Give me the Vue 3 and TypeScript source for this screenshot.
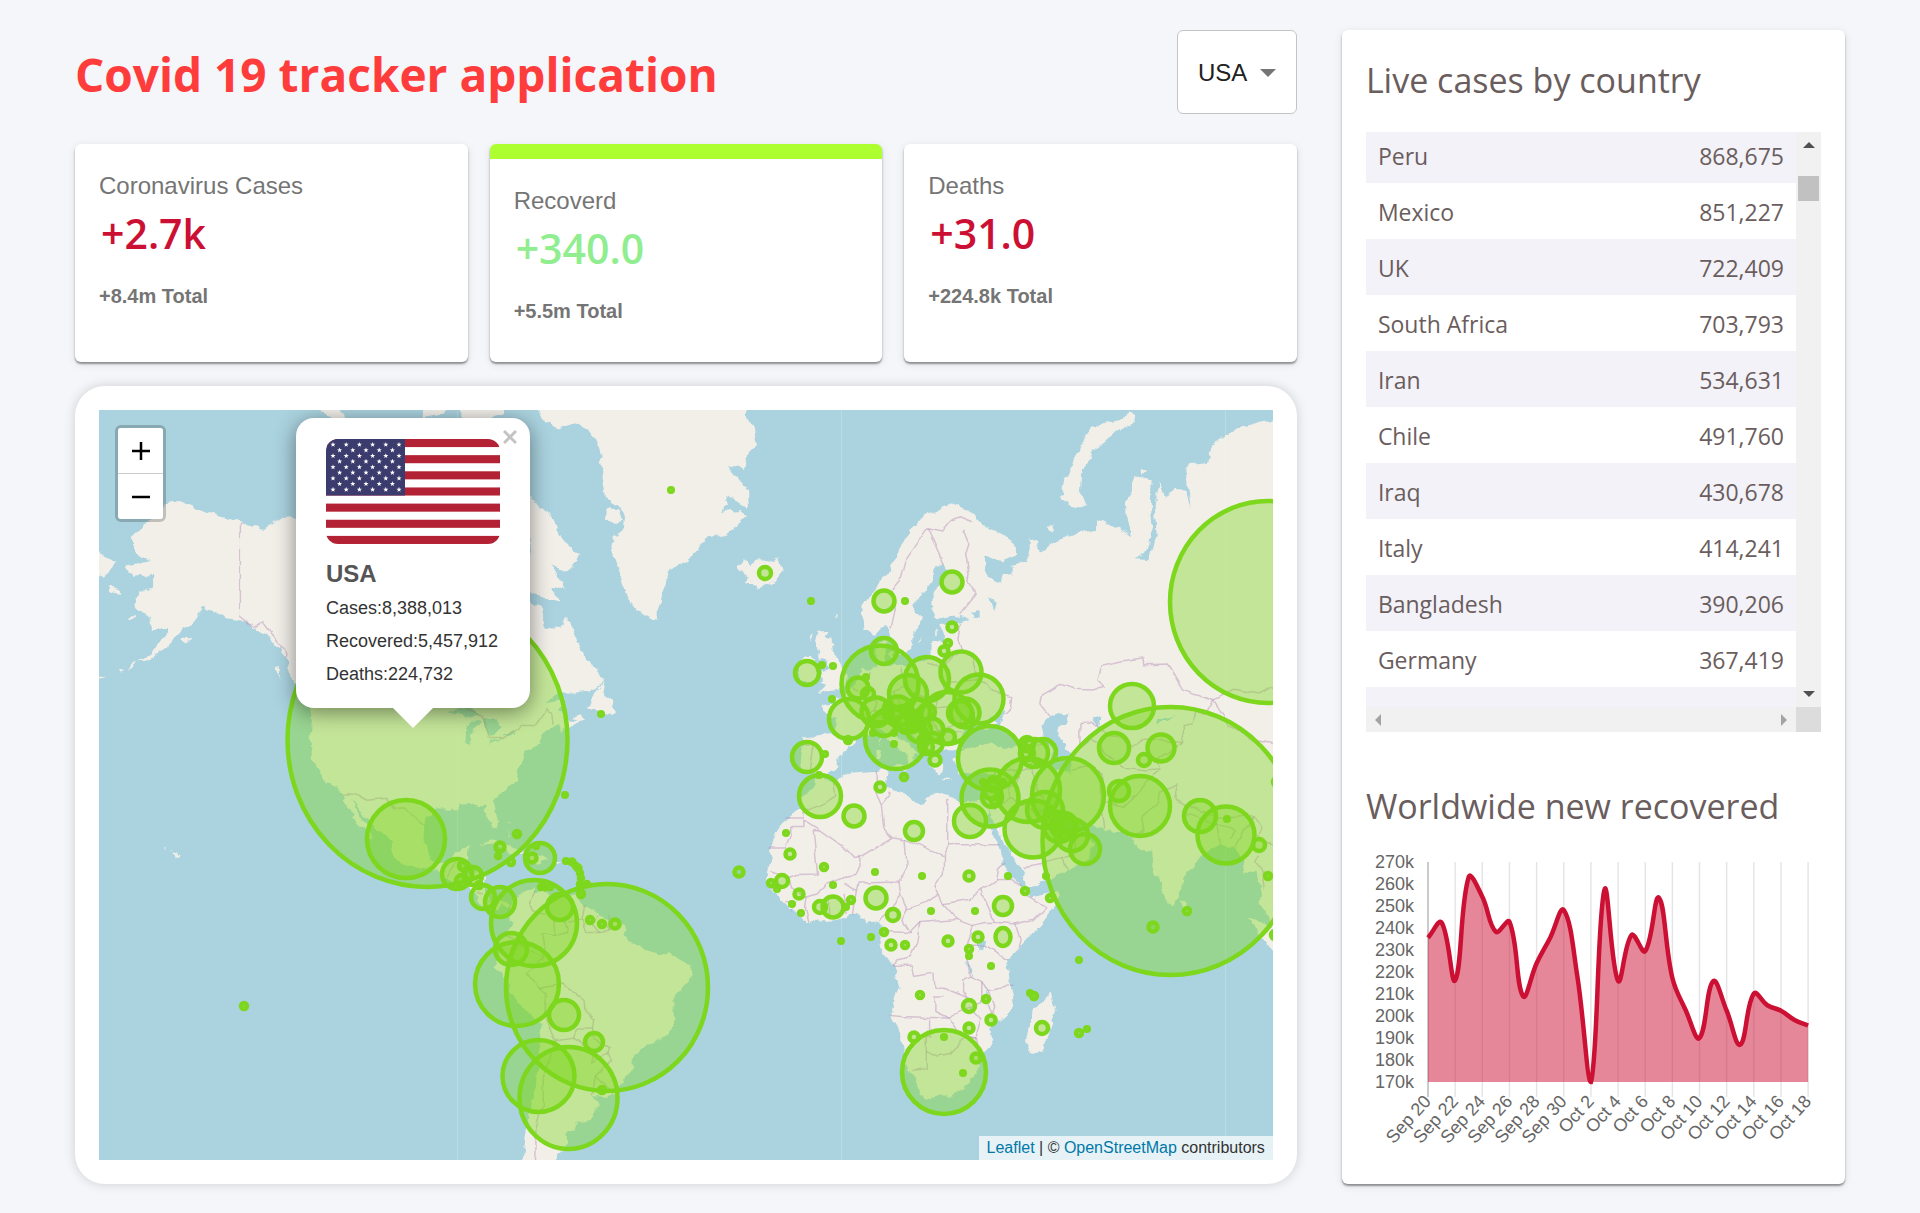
<script setup lang="ts">
import { ref } from 'vue'

const country = ref('USA')

interface Stat { title: string; value: string; total: string; tone: 'red' | 'green'; active: boolean }
const stats: Stat[] = [
  { title: 'Coronavirus Cases', value: '+2.7k', total: '+8.4m Total', tone: 'red', active: false },
  { title: 'Recoverd', value: '+340.0', total: '+5.5m Total', tone: 'green', active: true },
  { title: 'Deaths', value: '+31.0', total: '+224.8k Total', tone: 'red', active: false },
]

const rows: [string, string][] = [
  ['Peru', '868,675'], ['Mexico', '851,227'], ['UK', '722,409'], ['South Africa', '703,793'],
  ['Iran', '534,631'], ['Chile', '491,760'], ['Iraq', '430,678'], ['Italy', '414,241'],
  ['Bangladesh', '390,206'], ['Germany', '367,419'], ['', ''],
]

/* ---- line chart ---- */
const series = [
  235.6, 242.5, 216.2, 263.2, 254.2, 238.3, 242.8, 209, 224, 235.6, 248.2, 218, 170, 257.5, 216,
  236.8, 229.5, 253.8, 217.3, 202.4, 190, 215.8, 202.4, 187, 210.2, 204.9, 202.4, 198.2, 195.7,
]
const plot = { left: 62, right: 442, top: 12, bottom: 232 }
const step = (plot.right - plot.left) / (series.length - 1)
const pts = series.map((v, i) => ({
  x: plot.left + i * step,
  y: plot.bottom - ((v - 170) / 100) * (plot.bottom - plot.top),
}))
const clampY = (y: number) => Math.min(plot.bottom, Math.max(plot.top, y))

function spline(): string {
  const ctl = pts.map((c, i) => {
    const a = pts[i - 1] ?? c
    const b = pts[i + 1] ?? c
    const d0 = Math.hypot(c.x - a.x, c.y - a.y)
    const d1 = Math.hypot(b.x - c.x, b.y - c.y)
    const f0 = (0.4 * d0) / (d0 + d1)
    const f1 = (0.4 * d1) / (d0 + d1)
    return {
      px: c.x - f0 * (b.x - a.x), py: clampY(c.y - f0 * (b.y - a.y)),
      nx: c.x + f1 * (b.x - a.x), ny: clampY(c.y + f1 * (b.y - a.y)),
    }
  })
  let d = `M${pts[0].x} ${pts[0].y}`
  for (let i = 1; i < pts.length; i++) {
    d += `C${ctl[i - 1].nx} ${ctl[i - 1].ny} ${ctl[i].px} ${ctl[i].py} ${pts[i].x} ${pts[i].y}`
  }
  return d
}
const line = spline()
const area = `${line}L${plot.right} ${plot.bottom}L${plot.left} ${plot.bottom}Z`
const yTicks = Array.from({ length: 11 }, (_, i) => ({ label: `${270 - i * 10}k`, y: plot.top + i * 22 }))
const xTicks = ['Sep 20', 'Sep 22', 'Sep 24', 'Sep 26', 'Sep 28', 'Sep 30', 'Oct 2', 'Oct 4', 'Oct 6',
  'Oct 8', 'Oct 10', 'Oct 12', 'Oct 14', 'Oct 16', 'Oct 18'].map((label, i) => ({ label, x: plot.left + i * step * 2 }))

/* ---- flag ---- */
const stars: { x: number; y: number }[] = []
for (let r = 0; r < 9; r++) {
  for (let c = 0; c < (r % 2 ? 5 : 6); c++) stars.push({ x: 7 + c * 13.2 + (r % 2 ? 6.6 : 0), y: 5.6 + r * 5.62 })
}
const starPath = (x: number, y: number) =>
  Array.from({ length: 10 }, (_, k) => {
    const r = k % 2 ? 1.1 : 2.7
    const t = (Math.PI / 5) * k - Math.PI / 2
    return `${(x + r * Math.cos(t)).toFixed(2)},${(y + r * Math.sin(t)).toFixed(2)}`
  }).join(' ')

/* ---- map: web mercator, 1536 px round the globe ---- */
function project(list: string): string {
  return list.trim().split(/\s+/).map((p) => {
    const [lon, lat] = p.split(',').map(Number)
    const m = Math.log(Math.tan(Math.PI / 4 + (lat * Math.PI) / 360))
    return `${(841 + (lon * 1536) / 360).toFixed(1)},${(941 - 244.46 * m).toFixed(1)}`
  }).join(' ')
}

const land = [
  // North and Central America
  `-168,65.6 -162,66 -164,66.5 -166.5,68.3 -163,69.5 -156.5,71.3 -150,70.5 -141,69.6 -135,69 -130,70.2 -125,69.8
  -120,69.4 -115,68.3 -108,68 -102,67.8 -97,68 -94,71.5 -93,69 -88,68 -85,69.5 -82,68.5 -83,66.5 -87,65 -90,63.5
  -94,61 -94.5,59 -92.5,57 -88,56.5 -82.3,55 -82,53 -79.5,51.3 -79,54 -77,56 -78.5,58.7 -77.5,62.3 -74,62.3 -70,61
  -69.5,59 -66,58.8 -64.5,60.3 -62,57.5 -60,55 -57,53.5 -55.8,52 -56,51.4 -59,50.2 -66.5,50.2 -69,48.5 -65,49.2 -64.5,48
  -66,47.5 -64,46 -61,45.7 -64,44.5 -66,43.6 -66,45 -70,43.7 -70.7,42 -70,41.7 -74,40.7 -74.3,39.3 -75.5,38 -76,37
  -75.6,35.2 -78,33.9 -81,31.8 -81.3,29.5 -80.1,26.8 -80.5,25.2 -81.8,26.2 -82.8,28 -83.8,30 -86,30.4 -89.5,30.2
  -89.3,29.1 -91.5,29.4 -94.5,29.5 -97.2,27.8 -97.4,25.5 -97.8,22.5 -96.3,19.2 -94.5,18.1 -91.5,18.6 -90.4,20.5
  -87,21.5 -87.5,19.5 -88.2,18 -88.8,15.9 -85.5,15.9 -83.2,15 -83.7,11.5 -82,9 -79.5,9.5 -77.5,8.6 -78.3,7.8 -79.5,8.8
  -80.5,7.4 -83,8.2 -85.5,10 -87.5,13 -91.5,14 -94.5,16.2 -99,16.8 -103.5,18.3 -105.5,20.3 -105.5,22.5 -109,25.7
  -112.3,29 -114.6,31.7 -113.5,29.5 -111,26 -109.5,23.1 -110.3,23.4 -112,25.5 -114.8,27.8 -114.2,28.8 -115.8,30.3
  -117.2,32.6 -118.5,34 -120.6,34.6 -122.4,37.3 -124,39.5 -124.3,42.5 -124,46 -124.6,48.4 -122.5,48 -123,49.3
  -127.5,51 -130,54.5 -131.5,56 -134,58 -137,58.7 -140,59.8 -144,60.1 -147.5,61 -149.8,61.3 -152,59.3 -154,58.9
  -158,56.5 -162,55 -164.5,54.6 -161,56 -157.5,58.7 -162,58.7 -162,60 -165.5,61.5 -164.5,63.1 -161,63.6 -161,64.8 -166,64.6`,
  '-176,67.6 -170,66 -172.5,64.5 -176,64.8',
  '-171.7,63.6 -169,63.2 -169,62.9 -171.5,63.2',
  '-167,60.2 -165.5,60.2 -165.5,59.9 -167,59.9',
  '-166.5,54.1 -164.8,54.6 -166.8,53.4',
  '-169,53.3 -167.5,53.5 -168.5,52.9',
  '-174.5,52.4 -172,52.7 -174,52.1',
  '-154.7,57.6 -152.2,58 -153.5,57',
  '-133,54 -131.7,54 -131.2,52.2',
  '-128,50.7 -125,50 -123.5,48.4 -125.5,48.8',
  '-156,20.2 -155,19.6 -155.7,19', '-158.2,21.6 -157.7,21.3 -158,21.2', '-156.7,20.9 -156,20.8 -156.4,20.6',
  // Baffin and the northern islands
  '-62,66 -64,65.2 -68,65.8 -64.5,63.3 -68,63.6 -66,62 -72,62.7 -78,64.5 -73,65.5 -73,68 -79,70 -89,70.5 -89,73.5 -81,73.8 -75,72 -71,71 -68,70 -65,68 -61.4,66.8',
  '-86,65.6 -81,64 -83,62.8 -87,63.6',
  '-120,78 -116,76.5 -118,76.3 -122,77', '-89,78 -79,78 -79,76.8 -84,76.6 -89,76.4', '-98,78 -92,78 -93,76.7 -98,76.5',
  '-59.3,47.8 -57.3,50.5 -55.6,51.5 -56,50 -53.5,49.2 -53,46.7 -55.8,46.9',
  '-63.5,46.6 -61,47 -60,46 -61.5,45.6',
  // Caribbean
  '-85,22 -82,23.1 -77,21.5 -74.3,20.2 -77.5,19.9 -78.5,21.3 -83,22.3',
  '-74.4,18.5 -73.2,19.9 -70,19.7 -68.4,18.6 -71.5,17.7', '-78.3,18.4 -76.3,18.2 -77.5,17.8', '-67.2,18.5 -65.7,18.4 -66.8,18',
  '-78.2,25 -77.7,24.2 -78,23.9', '-77.8,26.8 -77,26.5 -78.5,26.7',
  // South America
  `-77.5,8.6 -75.5,10.7 -71.7,12.3 -71.8,10.8 -70,11.8 -68,10.6 -64,10.4 -61.9,10.6 -60,8.3 -57,6 -51.5,4.3 -50,0 -48,-1 -44,-2.7
  -40,-2.9 -37,-4.9 -35,-5.5 -34.9,-8 -39,-13 -39,-18 -41,-22 -44,-23 -48.5,-26 -48.7,-28.5 -53.5,-34 -58,-34.2 -57,-36.3
  -58.5,-38.4 -62,-39 -62.3,-40.7 -65,-41 -63.7,-42.6 -65.2,-44 -67.5,-46 -67,-48 -75,-48 -74,-42 -73.3,-38 -71.5,-32 -70.2,-19
  -76,-14.5 -79.5,-7.5 -81.2,-6 -80,-3.5 -80.9,-1 -78.5,1.5 -77.3,4 -77.8,7.5`,
  // Europe and Asia
  `-9,37 -9.5,38.8 -8.8,43 -4,43.5 -1.5,43.5 -1.2,46 -4.7,48 -1.5,48.7 -1.8,49.7 0,49.4 2,51 4,52 5,53.4 8.5,53.8 8.2,56.8
  10.5,57.7 10.5,56.2 10,54.8 11,54 14,54.2 18.5,54.7 21,55.3 21,57 22,57.6 24.2,57 24,58.5 23.5,59.3 28,59.6 30,60
  26,60.4 23,60 21.4,61 21.5,63 25.3,65 24,65.8 22,65.5 21.5,64.3 17.5,62 17.2,60.7 19,60 17,58.7 16.5,56.5 14.3,55.5
  12.9,55.6 11.3,58.8 10.5,59.4 8,58.1 5.5,58.8 5,61.5 8.5,63.6 12.5,66 15,68.3 19,70 25.5,71 31,70.3 33,69.4 38,68.5 41,67.5
  41,66.6 38,66.1 33,66.7 34.8,64.5 37.5,64 38,65 40,64.7 40,65.8 44,66.2 44,68.3 46,68 46,66.8 50,67.8 53,68.5 60,68.9 60,69.8
  64,69.2 68,68.2 67,69.7 66.8,71 69,73 72.8,72.8 72.6,71 73,69 71.5,66.9 69,66.4 72.5,66.3 74,68.5 73.5,71 74.8,72.6
  76,71.4 78,72.2 81,71.8 82,70.5 81.5,72 80.5,73.7 86,73.9 87,75 92,75.9 101.5,76.5 110,76.5 110,0 103,1 101,3
  100.3,6 98.3,8 98.7,10.5 97.6,16 94.5,16 94,18.5 92,21.5 90,22 87,21.4 85,19.7 82,16.7 80.2,15 80,12 79,10.3 78,8.2
  76.5,8.8 74.8,13 73,17 72.7,20.5 70.5,21 69,22.3 67,24.8 61.6,25.2 57,26.8 54,26.6 51,28 48.5,30 48,29.5 50,26.5
  51.2,24.5 54,24.1 56.3,26 56.6,24.4 59.7,22.5 57.8,19 55,17.2 52,15.6 45,12.9 43.3,12.7 42.7,16 39,21 35,28 34.9,29.4
  34.2,27.9 32.6,29.8 32.5,31.2 34.3,31.3 36,35.5 36,36.8 30.5,36.5 27.5,36.8 26.3,39.4 29,41 35,42 38,41 41.6,41.6
  37,45.2 39,47.2 35,46.3 36.5,45.2 33.6,44.5 32.7,46 30.8,46.5 28.5,43.7 28,41.9 28.8,41.2 26.2,40.7 24,40.8 22.8,40.3
  24,38 22.9,36.6 21.5,37.5 19.4,41 19.3,42 15.5,43.8 13.6,45.5 12.3,45.3 12.5,44 14,42.6 16,41.8 18.4,40.2 16.8,40.5
  17,39 15.8,38 15.6,40 12.4,41.8 10.3,43.7 8.8,44.4 6.5,43.2 3.2,43.2 3.2,41.9 -0.3,39.5 -0.7,37.7 -2,36.8 -5.5,36.1 -6.3,36.9`,
  '-5.5,50.1 1.3,51.1 1.7,52.7 0.2,53 -0.2,54.2 -1.6,55.5 -2,57.6 -4,57.7 -3,58.6 -5,58.5 -5.7,57 -5,55 -3,54.8 -3,53.4 -4.5,53.2 -4.5,52 -5.2,51.8 -3,51.5',
  '-6,52.2 -10,51.6 -9.5,53.3 -10,54.2 -7.5,55.3 -5.6,54.5',
  '12.5,38 15.6,38.2 15,36.7', '8.3,41 9.7,41 9.5,39.2 8.4,39', '8.7,42.6 9.5,43 9.3,41.5', '23.6,35.5 26.3,35.2 24,35',
  '32.4,35 34.5,35.6 33.5,34.7', '11,55.6 12.5,56 12,54.8', '18.2,57.4 19,57.9 18.3,57', '22,58.4 23.2,58.5 22.2,58',
  '48.2,69.2 50.3,69.2 49,68.7', '70,73.5 71.5,73.4 70.5,73.1', '-1.4,60.5 -1,60.6 -1.2,60', '-7.4,57.8 -6.4,58.4 -7,57.2',
  '80,9.7 81.8,7.2 80.5,6 79.8,8', '95.3,5.6 97.5,5.2 104,1 104,-5 100,-1',
  // Africa
  `-5.9,35.8 -2,35.1 3,36.9 10,37.3 11,36.8 10.2,34.2 15,32.4 19,30.3 20,32 23,32.7 29,30.9 32.5,31.2 32.5,29.9 35.5,24
  37.3,21 38,18 39.5,15.5 43.2,12.3 43,11.4 44.5,10.4 51.2,11.9 50.8,9 47,4 41.5,-1.8 39,-5 39.5,-9 40.6,-14.5 39.5,-16.5
  35,-20 35.5,-23.5 32.8,-25.8 32.5,-28.5 29,-32.5 25.7,-34 20,-34.8 18.4,-34 18,-32 15,-27 14.3,-22 11.8,-17 13.7,-11
  12.2,-6 9,-1 9.7,3.5 8.5,4.6 6,4.3 4,6.3 -2,4.8 -7.5,4.4 -13,8.7 -16.8,12.5 -17.4,14.7 -16.2,19 -17,21 -14.8,25.5
  -11.5,28.3 -9.6,30 -9.8,31.5 -6,34`,
  '49.3,-12 50.4,-15.5 47,-25 45,-25.5 43.5,-23 44.3,-20 44.3,-16.5 48,-13.5',
].map(project)

const arctic = [
  'M538 396v14l7 12 12 6 16-6 17 10 10 18 3 30 3 18 12 7 7 10-1 15-10 5-2 15 8 25 8 22 9 14 18 9 5-15 6-23 6-14 18-8 10-15 6-7 22-5 19-18-9-5-18 3 8-8-3-10 10 5 14 10-1-20-13-15-7-10 17 5 3-15 10-10-3-15-7-10-2-10v-14Z',
  'M608 507l10 2 5 10-8 6-8-6Z',
  'M738 566l7-8 5 8 8-4 8-3 8 2 5-4 4 13-8 12-15 6-16-4 4-6-4-5Z',
  'M1129 411l7 6-4 8-17 8-15 12-12 15-8 15-1 15 7 18-16-2-8-9 3-17 7-15 8-20 10-15 12-6 16-4Z',
]

const water = [
  '47,45 49,46.6 51,47 53,46.8 53,45.3 51,44.7 51,43.6 52.7,42 52.8,41 53.8,40.3 53.8,37 50,37.4 49,38.5 49.5,40.5 47.5,43',
  '-92,46.8 -88,48.6 -84.7,46.6 -87.5,46.5', '-88,42 -87.9,44.5 -86,46 -84.5,45.8 -86.4,43.5 -87,41.8',
  '-84,45.9 -81,45.9 -80,44.6 -81.8,43.3 -83.5,44', '-83,41.6 -79,42.8 -81,42.6', '-79.7,43.3 -76.3,44 -76.5,43.4',
  '-98,53.5 -96.5,51 -98.8,52', '-117,61 -109,62.5 -113,61.6', '-124,66.5 -118,66 -121,65',
  '30.2,61 32.5,61 32.5,60 31,60', '34.5,62.5 36,62 35.5,61', '58.5,46 61,46.5 60,44.5',
  '74,46 79,46.7 74.5,45.4', '31.8,0.3 34,0 33.5,-2.4 32,-2.3', '29.2,-3.5 30.6,-7 31.1,-8.6 30,-7.2', '34,-10 34.8,-13.8 34.4,-13.5',
].map(project)

const borders = [
  '-141,69.6 -141,60.3 -137.5,58.9 -135.5,59.7 -133.5,58.3 -130,56 -130.2,55',
  '-123,49 -95,49 -89,48 -84,46.5 -82.5,43 -79,43 -76.5,44 -74.7,45 -71.5,45 -70.3,46.2 -69.2,47.4 -67.8,47 -67.5,45.2',
  '-117,32.5 -114.7,32.6 -111,31.3 -106.5,31.7 -104.5,29.5 -102.5,29.8 -99.5,27.5 -97.2,25.9',
  '-92,14.6 -91.5,16 -90.5,17.8 -89.2,17.8 -89,16', '-89.3,14.4 -87.5,13.2', '-85.5,11.2 -83.7,11',
  '-77.3,8.5 -77.8,7.2', '-71.5,11.8 -73,9.2 -72,7 -67.5,6.2 -67,1.3 -70,1.7 -69.5,-1 -70,-4.2 -73,-2.3 -75.3,-0.1 -78.8,1.4',
  '-67,1.3 -64,2 -64.7,4.2 -60.7,5.2 -60,8.2', '-60.7,5.2 -59.8,2 -56.5,2 -54.5,2.3 -51.6,4.2', '-57.3,5.9 -58,4 -56.5,2', '-54,5.8 -54.5,2.3',
  '-80.2,-3.4 -78.5,-5 -75.5,-1 -75.3,-0.1', '-70,-4.2 -73.5,-7.5 -70.5,-11 -69,-12.4 -69.5,-17.5 -70.3,-18.3',
  '-70.5,-11 -65.3,-10 -60.2,-13.8 -60,-16.2 -57.7,-18 -58,-20 -62,-20 -62.7,-22.2 -67,-22.8 -69.5,-17.5',
  '-58,-20 -57.8,-22.2 -54.3,-24.2 -54.6,-25.6 -58.5,-27.3 -57.8,-25.2 -62.7,-22.2',
  '-54.6,-25.6 -53.8,-27 -57.6,-30.2 -58.3,-34', '-57.6,-30.2 -53.4,-33.7', '-67,-22.8 -68.5,-27 -70,-31 -70,-36 -71.5,-40 -71.5,-45 -72,-48',
  '11.5,58.9 12.5,61.2 12,63.3 14.2,64.5 15.5,66.5 20,69 20.5,69.1 23.8,68.8 25.8,69.7 28,70 30.9,69.6', '20.5,69.1 24,66 24.2,65.8',
  '28.5,69 30,67.7 29.2,66.8 30,65 29.7,64 31.5,62.8 27.8,60.6', '-7.4,37.2 -7,39.5 -6.5,41.7 -8.7,42', '-1.7,43.4 3.1,42.5',
  '2.5,51 6,49.5 8.2,49 7.6,47.6 6.1,46.3 7.6,43.8', '6,49.5 6.2,51.5 7.1,53.2', '7.6,47.6 10.5,46.9 13.6,46.6', '14.3,53.9 14.8,51 12.2,50.3 13.8,48.7 13,47.6',
  '14.8,51 18.8,49.5 22.6,49.1 24,51 23.6,52.6 23.5,54 20,54.4', '23.5,54 26.5,55.4 28.2,56.2 27.4,57.6 28,59.4', '28.2,56.2 31,55 31.8,53.2 31.7,52.1 24,51.6',
  '31.7,52.1 34.3,51.5 35.5,50.4 40,49.6 39.7,47.9 38.3,47.1', '22.6,49.1 22.2,48 26.6,48.3 28.2,46.5 28.2,45.5 22.5,44 21,46.3 22.2,48', '28.5,43.7 22.7,44.1 22.9,42 26.4,42',
  '51,51.5 47,50 46.6,48.5 49,46.5', '51,51.5 55,50.7 59,50.6 61.5,51 60.2,52.2 61.2,54 65,54.5 71,55 71.2,54.2 76.5,54.3 80,50.8 87.3,49.1 85.5,47 83,47.2 82.3,45.3 80.2,45 80.3,42.1',
  '56,45.5 56,41.3 58.5,42.7 60,42.2 62,40.2 66.6,37.5 71.5,37 75,37.2 74,39 80.3,42.1', '56,45.5 58.6,45.6 62,43.5 66,42.8 68,41.2 71,42.7 80.3,42.1',
  '54,37.3 58,38 61.2,36.6 61,34 61,31 61.8,25.3', '61,31 66.3,29.9 69.5,32.5 71.5,35 74.8,37', '68.2,23.9 71,25 70.5,28 74,30.5 75,33 78.5,34.5 78.8,31.5 81,30.2 88,27.9 92,27.8 97,28.2 94.5,25 92.4,21.2',
  '81,30.2 80.2,28.8 88.1,26.4 89.8,26.2 92.4,25 91.3,23.5', '88.1,26.4 88.5,24 89,22', '97,28.2 98.7,25.8 97.6,24 101,21.7', '98,19.8 97.5,18.5 98.7,16 99.2,12',
  '87.3,49.1 92,50.7 98,50 102,51.3', '87.3,49.1 91,45.2 96,42.8 105,41.6', '44.8,37.2 44,39.4 48,38.8 48.8,38.4', '36,36.8 42.4,37.1 44.8,37.2 46,35 45.5,33.8 48,30.5', '42.4,37.1 41,34.5 38.8,33.3 39.2,32.1 44.7,29.2 47.5,29 48,30',
  '36,29.2 38,30.5 39.2,32.1', '42.8,16.4 44.5,17.4 52,19 53,16.6', '52,19 55,20 55.2,22.7 51.5,24.2', '41.5,41.5 46.5,41.8 48.5,41.8',
  '-13,27.7 -8.7,27.7 -8.7,25.9 -12,25.9 -12,23.5 -13,21.3 -17,21.3', '-8.7,27.7 -8.7,28.8 -3.5,31 -1.2,32.2 -1.8,35', '-8.7,27.2 -4.8,25 -6.5,25 -5.5,15.5 -10.5,15.4 -12,14.8 -16.4,16.3',
  '-4.8,25 1.2,21.1 3.2,19 4.2,19.2 12,23.5 10,25.5 9.5,30.2 8.2,33 8.3,36.8', '12,23.5 15,23 24,19.5 24,20 25,22 25,31.6', '25,22 36.9,22', '9.5,30.2 11.4,32.3 11.5,33.2',
  '4.2,19.2 4.2,16.8 3.5,15.4 1,15 -3.5,13.5 -5.5,11 -8,10.2 -11.4,12.4 -12,14.8', '15,23 15.5,17 13.6,13.7 4,13.5 3.6,11.7 1,13.4', '24,19.5 24,15.7 22,12.8 23,10.9 20,9 15.5,7.5 14,11 13.6,13.7',
  '3.6,11.7 2.7,6.4', '0.5,11 1.2,6.1', '-2.8,11 -3,5.1', '-7.5,4.4 -8.3,7.5 -8,10.2', '-11.5,7 -10.6,9 -13,9.2', '-16.7,12.4 -13.7,12.6', '8.7,4.8 11,6.8 14,11', '15.5,7.5 14.5,4.8 16.2,2 10,2.2',
  '16.2,2 18.5,4.3 27.3,5 24,8.7 23,10.9', '18.5,4.3 17.7,-0.5 16,-4 12.8,-4.7 12.3,-5.9', '27.3,5 31,3.6 34,4.3 36,4.4 41,4 42,-0 41.5,-1.7', '24,8.7 30,9.7 33,12 34,8.5 36,4.5', '33,12 36.5,14.2 37,17 38.5,18', '36.5,14.2 40,14.3 42.5,12.4', '41,4 45,5 48,8 43,11',
  '31,3.6 29.6,-1 29.3,-4.4 30.7,-8.2 28.5,-9.1 28.5,-12 29.8,-13.3 24,-11 22,-11 21.8,-7.3 17,-8 16.5,-5.9 12.3,-5.9', '29.6,-1 34,-1 39.2,-4.7', '30.7,-8.2 33,-9.5 34.5,-11.5 40.4,-10.5', '33,-9.5 33,-14 30.2,-15.3 25.3,-17.8 22,-16.3 22,-13 24,-13',
  '11.8,-17.2 14,-17.4 23.3,-17.7 25.3,-17.8 28,-21.6 31.3,-22.4 32.8,-18 30.2,-15.3', '21,-18 21,-22 20,-22 20,-28.4 17,-28.8', '20,-24.8 22.5,-26 25.5,-25.5 29.3,-22.2 31.3,-22.4 32,-26 32.8,-26.8',
  '34.5,-11.5 35.8,-15 35.2,-17 34.3,-14.5',
].map(project)

/* x, y, radius and, for the widest ones, the vertical radius */
const circles: number[][] = [
  [427.5, 740, 140, 147], [406, 839, 39], [607, 987.5, 101, 103.5], [1170.5, 841, 128, 134], [1268, 602, 98, 101],
  [457, 874, 15], [473, 876, 9], [462, 881, 6], [463, 866, 4], [479, 885, 3], [483, 897, 12], [500, 902, 15], [500, 847, 4.5],
  [498, 856, 2], [511, 862, 3], [517, 834, 3], [540, 858, 15], [532, 858, 4.5], [536, 846, 2], [565, 795, 1.8],
  [566, 861, 1.8], [572, 862, 2.5], [576, 866, 2], [578, 868, 2.5], [580, 873, 2], [581, 878, 2], [580, 884, 2], [580, 888, 2], [587, 884, 2], [581, 894, 3],
  [534, 923, 43], [560, 907, 13], [541, 887, 2], [545, 887, 2.5], [550, 887, 2], [590, 920, 3], [602, 924, 3], [615, 924, 4.5],
  [511, 949, 16], [517, 984, 42], [564, 1015, 15], [594, 1042, 9], [538.5, 1076, 36], [568.5, 1098, 49, 51], [602, 1090, 3],
  [739, 872, 4.5], [244, 1006, 3], [671, 490, 1.8], [765, 573, 6], [811, 601, 1.8], [807, 673, 12], [822, 665, 1.8], [833, 666, 1.8], [832, 699, 1.8], [601, 714, 1.8],
  [952, 582, 10.5], [884, 601, 10.5], [905, 601, 1.8], [952, 627, 4.5], [948, 643, 3], [944, 651, 4.5], [884, 651, 13], [880, 684, 38.5],
  [961, 672, 20.5], [927, 679, 22], [979, 699, 24.5], [908, 694, 19], [858, 688, 10.5], [866, 677, 1.8], [868, 694, 6], [849, 719, 20],
  [876, 712, 14.5], [898, 711, 14.5], [896, 738, 31], [903, 718, 12], [884, 724, 12], [917, 712, 13], [927, 712, 8], [947, 718, 26], [965, 713, 14.5],
  [960, 713, 12], [932, 730, 11.5], [919, 730, 12], [907, 724, 9], [913, 726, 6], [948, 737, 7], [933, 743, 10], [926, 747, 7], [923, 741, 5], [935, 760, 5.5],
  [873, 733, 1.8], [894, 733, 1.8], [894, 744, 1.8], [848, 740, 3], [904, 777, 3], [880, 787, 4.5], [807, 757, 15], [825, 754, 1.8], [819, 775, 1.8],
  [820, 796, 21], [854, 816, 10.5], [786, 833, 1.8], [914, 831, 9], [970, 821, 16], [990, 758, 32], [990, 798, 28.5], [992, 790, 9], [992, 797, 10],
  [994, 784, 7], [983, 782, 2], [1003, 782, 2], [995, 801, 4], [1028, 790, 32], [1027, 744, 7], [1034, 753, 14], [1043, 752, 13], [1027, 753, 7],
  [1033, 829, 28.5], [1068, 795, 36, 37], [1045, 810, 18], [1059, 827, 15], [1064, 826, 13], [1068, 825, 9], [1072, 835, 16], [1085, 849, 15],
  [1140, 806, 30], [1119, 791, 10], [1114, 748, 15], [1161, 748, 13.5], [1144, 760, 6], [1132, 706, 22], [1200, 816, 16], [1226, 835, 28.5], [1227, 819, 1.8],
  [1259, 845, 6], [1268, 876, 3], [1187, 911, 3], [1153, 927, 4.5], [1079, 960, 1.8], [1277, 782, 4], [1275, 935, 4],
  [1008, 876, 1.8], [1046, 876, 1.8], [1025, 891, 3], [1050, 898, 3], [1003, 906, 9], [1003, 937, 7.5, 9],
  [790, 854, 4.5], [824, 867, 3], [875, 872, 1.8], [922, 876, 1.8], [969, 876, 4.5], [782, 881, 6], [771, 883, 3], [777, 889, 1.8], [799, 894, 4.5],
  [833, 885, 1.8], [792, 904, 1.8], [801, 913, 1.8], [820, 907, 6], [833, 907, 10.5], [846, 907, 1.8], [851, 900, 3], [876, 898, 10.5], [893, 915, 6],
  [931, 911, 1.8], [975, 911, 1.8], [884, 932, 3], [871, 937, 1.8], [841, 941, 1.8], [891, 945, 4.5], [905, 945, 3], [948, 941, 4.5], [978, 937, 4.5],
  [969, 949, 3], [969, 956, 1.8], [991, 966, 1.8], [920, 995, 3], [969, 1006, 6], [986, 999, 3], [991, 1020, 4.5], [969, 1028, 4.5], [914, 1037, 4.5],
  [944, 1037, 1.8], [944, 1072, 42], [976, 1058, 4.5], [963, 1073, 1.8], [1042, 1028, 6], [1030, 993, 1.8], [1034, 996, 3], [1079, 1033, 3], [1087, 1029, 1.8],
]
</script>

<template>
  <div class="app">
    <main class="left">
      <header class="header">
        <h1>Covid 19 tracker application</h1>
        <div class="picker">
          <select v-model="country" aria-label="Country">
            <option>USA</option>
            <option>Worldwide</option>
          </select>
          <svg class="caret" viewBox="0 0 16 8" aria-hidden="true"><path d="M0 0h16l-8 8z" /></svg>
        </div>
      </header>

      <section class="stats">
        <article v-for="s in stats" :key="s.title" class="card stat" :class="{ active: s.active }">
          <p class="stat-title">{{ s.title }}</p>
          <h2 :class="s.tone">{{ s.value }}</h2>
          <p class="stat-total">{{ s.total }}</p>
        </article>
      </section>

      <section class="map-card">
        <div class="map">
          <svg class="world" viewBox="99 410 1174 750" preserveAspectRatio="xMinYMin slice" aria-hidden="true">
            <defs>
              <filter id="coast" x="0" y="0" width="100%" height="100%">
                <feTurbulence type="fractalNoise" baseFrequency="0.09" numOctaves="3" seed="4" />
                <feDisplacementMap in="SourceGraphic" scale="8" xChannelSelector="R" yChannelSelector="G" />
              </filter>
              <filter id="frontier" x="0" y="0" width="100%" height="100%">
                <feTurbulence type="fractalNoise" baseFrequency="0.06" numOctaves="2" seed="7" />
                <feDisplacementMap in="SourceGraphic" scale="6" xChannelSelector="R" yChannelSelector="G" />
              </filter>
            </defs>
            <rect x="99" y="410" width="1174" height="750" fill="#aad3df" />
            <g filter="url(#coast)">
              <g fill="#f2efe9">
                <polygon v-for="(p, i) in land" :key="i" :points="p" />
                <path v-for="(d, i) in arctic" :key="'a' + i" :d="d" />
              </g>
              <polygon v-for="(p, i) in water" :key="'w' + i" :points="p" fill="#aad3df" />
            </g>
            <g filter="url(#frontier)">
              <polyline v-for="(p, i) in borders" :key="'b' + i" :points="p" class="border" />
            </g>
            <path d="M457.500 410v750M841.500 410v750M1225.500 410v750" stroke="#fff" stroke-opacity=".2" />
            <ellipse v-for="(c, i) in circles" :key="'c' + i" class="spot" :cx="c[0]" :cy="c[1]" :rx="c[2]" :ry="c[3] ?? c[2]" />
          </svg>

          <div class="zoom">
            <button type="button" aria-label="Zoom in"><svg viewBox="0 0 18 18"><path d="M9 0v18M0 9h18" /></svg></button>
            <button type="button" aria-label="Zoom out"><svg viewBox="0 0 18 18"><path d="M0 9h18" /></svg></button>
          </div>

          <div class="popup">
            <button type="button" class="close" aria-label="Close popup"><svg viewBox="0 0 14 14"><path d="M1 1l12 12M13 1L1 13" /></svg></button>
            <svg class="flag" viewBox="0 0 174 105" aria-hidden="true">
              <rect width="174" height="105" fill="#fff" />
              <rect v-for="n in 7" :key="n" width="174" height="8.080" :y="(n - 1) * 16.15" fill="#b22234" />
              <rect width="79" height="56.500" fill="#3c3b6e" />
              <polygon v-for="(s, i) in stars" :key="'s' + i" :points="starPath(s.x, s.y)" fill="#fff" />
            </svg>
            <h3>USA</h3>
            <p>Cases:8,388,013</p>
            <p>Recovered:5,457,912</p>
            <p>Deaths:224,732</p>
          </div>

          <div class="credit"><a href="#">Leaflet</a> | © <a href="#">OpenStreetMap</a> contributors</div>
        </div>
      </section>
    </main>

    <aside class="card side">
      <h3>Live cases by country</h3>
      <div class="scroller">
        <div class="rows">
          <table>
            <tbody>
              <tr v-for="(r, i) in rows" :key="i"><td>{{ r[0] }}</td><td>{{ r[1] }}</td></tr>
            </tbody>
          </table>
        </div>
        <div class="bar vertical">
          <svg viewBox="0 0 12 6"><path d="M0 6h12L6 0z" /></svg>
          <span class="thumb"></span>
          <svg viewBox="0 0 12 6"><path d="M0 0h12L6 6z" /></svg>
        </div>
        <div class="bar horizontal">
          <svg viewBox="0 0 6 12"><path d="M6 0v12L0 6z" /></svg>
          <svg viewBox="0 0 6 12"><path d="M0 0v12l6-6z" /></svg>
        </div>
        <div class="corner"></div>
      </div>

      <h3 class="second">Worldwide new recovered</h3>
      <svg class="chart" viewBox="0 0 455 310" role="img" aria-label="Worldwide new recovered">
        <g class="grid">
          <path v-for="(t, i) in xTicks" :key="i" :d="`M${t.x} ${plot.top}V${plot.bottom + 15}`" :class="{ axis: i === 0 }" />
        </g>
        <path :d="area" fill="#cc1034" fill-opacity=".5" />
        <path :d="line" class="line" />
        <g class="labels">
          <text v-for="t in yTicks" :key="t.label" x="48" :y="t.y + 6" text-anchor="end">{{ t.label }}</text>
          <text v-for="t in xTicks" :key="t.label" :transform="`translate(${t.x + 4} 252) rotate(-48)`" text-anchor="end">{{ t.label }}</text>
        </g>
      </svg>
    </aside>
  </div>
</template>

<style>
body {
  background: #f5f6fa;
}
</style>

<style scoped>
* {
  box-sizing: border-box;
  margin: 0;
}
.app {
  display: grid;
  grid-template-columns: minmax(0, 17fr) minmax(0, 7fr);
  gap: 45px;
  align-items: start;
  padding: 30px 75px 28px;
  font-family: "Liberation Sans", Arial, sans-serif;
}
.header {
  display: flex;
  justify-content: space-between;
  align-items: center;
  margin-bottom: 30px;
}
h1 {
  font: 700 46px/64px "Open Sans", "Noto Sans", sans-serif;
  color: #ff3c3c;
  padding-top: 4px;
}
.picker {
  position: relative;
}
select {
  appearance: none;
  display: block;
  width: 120px;
  height: 84px;
  padding: 0 20px;
  border: 1px solid #c4c4c4;
  border-radius: 6px;
  background: #fff;
  color: #212121;
  font: 24px "Liberation Sans", Arial, sans-serif;
}
.caret {
  position: absolute;
  right: 21px;
  top: 39px;
  width: 16px;
  height: 8px;
  fill: #757575;
  pointer-events: none;
}
.stats {
  display: grid;
  grid-template-columns: repeat(3, minmax(0, 1fr));
  gap: 22px;
  margin-bottom: 24px;
}
.card {
  background: #fff;
  border-radius: 6px;
  box-shadow: 0 2px 2px rgba(0, 0, 0, 0.38), 0 2px 8px rgba(0, 0, 0, 0.1);
}
.stat {
  min-height: 218px;
  padding: 24px;
}
.active {
  border-top: 15px solid greenyellow;
}
.stat-title {
  font-size: 24px;
  line-height: 36px;
  color: #757575;
}
h2 {
  padding-left: 2px;
  font: 600 41px/58px "Open Sans", "Noto Sans", sans-serif;
}
.red {
  color: #cc1034;
}
.green {
  color: lightgreen;
}
.stat-total {
  margin-top: 16px;
  font-size: 20px;
  font-weight: 700;
  line-height: 36px;
  color: #757575;
}
.map-card {
  padding: 24px;
  border-radius: 30px;
  background: #fff;
  box-shadow: 0 0 12px rgba(0, 0, 0, 0.16);
}
.map {
  position: relative;
  overflow: hidden;
}
.world {
  display: block;
  width: 100%;
  height: 750px;
}
.border {
  fill: none;
  stroke: #b48cb4;
  stroke-opacity: 0.45;
  stroke-width: 1.5;
  stroke-linejoin: round;
}
.spot {
  fill: #7dd71d;
  fill-opacity: 0.4;
  stroke: #7dd71d;
  stroke-width: 4.5;
}
.zoom {
  position: absolute;
  left: 16px;
  top: 15px;
  border: 3px solid rgba(0, 0, 0, 0.2);
  border-radius: 6px;
  background-clip: padding-box;
}
.zoom button {
  display: flex;
  justify-content: center;
  align-items: center;
  width: 45px;
  height: 45px;
  padding: 0;
  border: 0;
  border-radius: 0 0 3px 3px;
  background: #fff;
}
.zoom button:first-child {
  height: 46px;
  border-bottom: 1px solid #ccc;
  border-radius: 3px 3px 0 0;
}
.zoom svg {
  width: 18px;
  height: 18px;
  stroke: #000;
  stroke-width: 2.5;
}
.popup {
  position: absolute;
  left: 197px;
  top: 8px;
  width: 234px;
  height: 290px;
  padding: 21px 30px;
  border-radius: 18px;
  background: #fff;
  color: #333;
  box-shadow: 0 4px 21px rgba(0, 0, 0, 0.45);
}
.popup::after {
  content: "";
  position: absolute;
  left: 97px;
  top: 290px;
  border: 20px solid transparent;
  border-top-color: #fff;
  border-bottom: 0;
}
.close {
  position: absolute;
  right: 12px;
  top: 11px;
  width: 16px;
  height: 16px;
  padding: 1px;
  border: 0;
  background: none;
}
.close svg {
  display: block;
  stroke: #c3c3c3;
  stroke-width: 3;
}
.flag {
  display: block;
  width: 174px;
  height: 105px;
  border-radius: 12px;
}
.popup h3 {
  margin: 14px 0 2px;
  font-size: 24px;
  line-height: 32px;
  color: #555;
}
.popup p {
  font-size: 18px;
  line-height: 33px;
}
.credit {
  position: absolute;
  right: 0;
  bottom: 0;
  padding: 0 8px;
  background: rgba(255, 255, 255, 0.7);
  font-size: 16px;
  line-height: 24px;
  color: #333;
}
.credit a {
  color: #0078a8;
  text-decoration: none;
}
.side {
  padding: 24px;
  color: #6a5d5d;
}
.side h3 {
  margin-bottom: 26px;
  font: 400 34px/52px "Open Sans", "Noto Sans", sans-serif;
  white-space: nowrap;
}
.side .second {
  margin: 48px 0 18px;
}
.scroller {
  display: grid;
  grid-template-columns: minmax(0, 1fr) 25px;
  grid-template-rows: 575px 25px;
}
.rows {
  overflow: hidden;
}
table {
  width: 100%;
  margin-top: -5px;
  border-collapse: collapse;
  font: 23px "Open Sans", "Noto Sans", sans-serif;
}
tr:nth-child(odd) {
  background: #f3f2f8;
}
td {
  height: 56px;
  padding: 2px 12px 0;
}
td:last-child {
  text-align: right;
}
.bar {
  display: flex;
  align-items: center;
  background: #f1f1f1;
}
.vertical {
  flex-direction: column;
  padding: 10px 2px;
}
.vertical svg {
  width: 12px;
  height: 6px;
  fill: #505050;
}
.vertical svg:last-child {
  margin-top: auto;
}
.thumb {
  width: 21px;
  height: 25px;
  margin-top: 28px;
  background: #c1c1c1;
}
.horizontal {
  justify-content: space-between;
  padding: 0 9px;
}
.horizontal svg {
  width: 6px;
  height: 12px;
  fill: #a3a3a3;
}
.corner {
  background: #dcdcdc;
}
.chart {
  display: block;
  width: 100%;
}
.grid path {
  stroke: #000;
  stroke-opacity: 0.1;
  stroke-width: 1.5;
}
.grid .axis {
  stroke-opacity: 0.28;
}
.line {
  fill: none;
  stroke: #cc1034;
  stroke-width: 4.5;
}
.labels {
  font-size: 18px;
  fill: #666;
}
</style>
